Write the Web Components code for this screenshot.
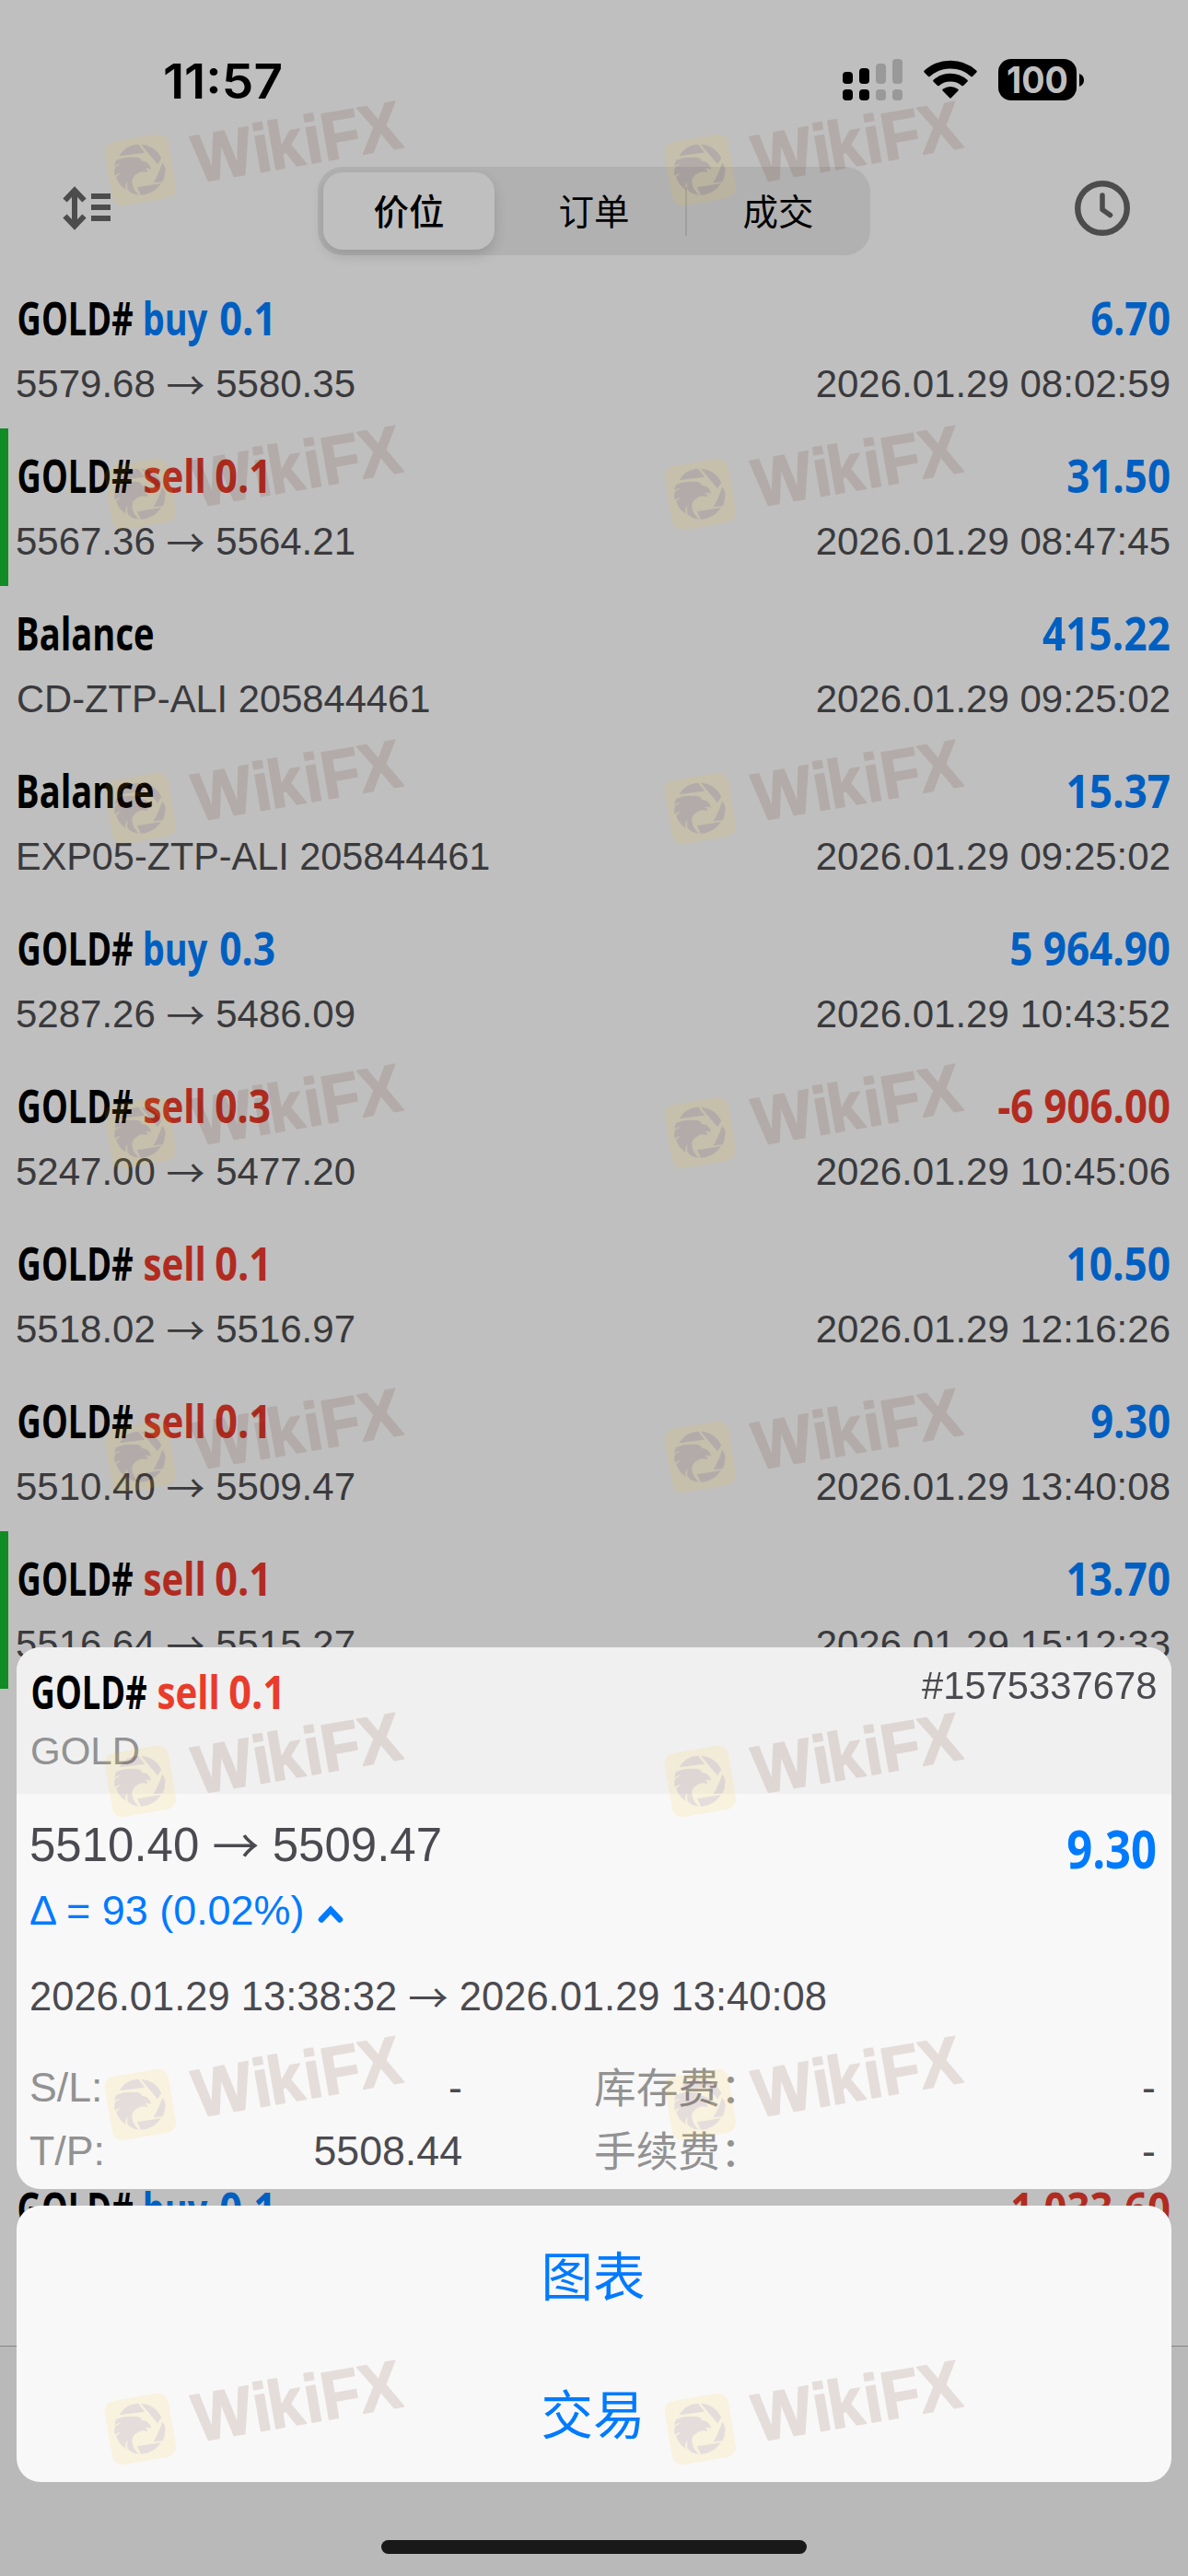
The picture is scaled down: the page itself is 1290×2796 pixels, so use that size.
<!DOCTYPE html>
<html lang="zh-CN">
<head>
<meta charset="utf-8">
<meta name="viewport" content="width=1290">
<title>History</title>
<style>
  :root {
    --bg: #bfbfbf;
    --tab-bg: #b9b9b9;
    --ink: #3a3a3d;
    --buy: #005fc1;
    --sell: #b12b20;
    --mark: #118b24;
    --sheet: #f8f8f8;
    --sheet-ink: #4b4a50;
    --muted: #929292;
    --tint: #007aff;
    --body-font: "Liberation Sans", Arial, "Noto Sans CJK SC", sans-serif;
    --bold-font: "Open Sans", "Noto Sans", sans-serif;
  }

  body {
    margin: 0;
    background: var(--bg);
    font-family: var(--body-font);
  }
</style>
</head>
<body>

<app-screen>
  <status-bar slot="status"></status-bar>
  <nav-bar slot="nav">
    <seg-item selected>价位</seg-item>
    <seg-item>订单</seg-item>
    <seg-item divider>成交</seg-item>
  </nav-bar>

  <deal-row side="buy" symbol="GOLD#" volume="0.1" value="6.70" width="85" from="5579.68" to="5580.35" date="2026.01.29 08:02:59"></deal-row>
  <deal-row side="sell" symbol="GOLD#" volume="0.1" value="31.50" width="111" from="5567.36" to="5564.21" date="2026.01.29 08:47:45" marked></deal-row>
  <deal-row symbol="Balance" value="415.22" width="138" note="CD-ZTP-ALI 205844461" note-width="446" date="2026.01.29 09:25:02"></deal-row>
  <deal-row symbol="Balance" value="15.37" width="110" note="EXP05-ZTP-ALI 205844461" note-width="511" date="2026.01.29 09:25:02"></deal-row>
  <deal-row side="buy" symbol="GOLD#" volume="0.3" value="5 964.90" width="172" from="5287.26" to="5486.09" date="2026.01.29 10:43:52"></deal-row>
  <deal-row side="sell" symbol="GOLD#" volume="0.3" value="-6 906.00" width="186" from="5247.00" to="5477.20" date="2026.01.29 10:45:06" loss></deal-row>
  <deal-row side="sell" symbol="GOLD#" volume="0.1" value="10.50" width="110" from="5518.02" to="5516.97" date="2026.01.29 12:16:26"></deal-row>
  <deal-row side="sell" symbol="GOLD#" volume="0.1" value="9.30" width="85" from="5510.40" to="5509.47" date="2026.01.29 13:40:08"></deal-row>
  <deal-row side="sell" symbol="GOLD#" volume="0.1" value="13.70" width="110" from="5516.64" to="5515.27" date="2026.01.29 15:12:33" marked></deal-row>
  <list-gap rows="3"></list-gap>
  <deal-row side="buy" symbol="GOLD#" volume="0.1" value="-1 033.60" width="186" loss></deal-row>

  <action-sheet slot="sheet">
    <deal-card></deal-card>
    <sheet-actions>
      <sheet-button>图表</sheet-button>
      <sheet-button>交易</sheet-button>
    </sheet-actions>
  </action-sheet>

  <water-marks slot="marks"></water-marks>
</app-screen>

<script>
function define(name, html, setup) {
  const template = document.createElement("template");
  template.innerHTML = html;

  customElements.define(name, class extends HTMLElement {
    constructor() {
      super();
      this.attachShadow({ mode: "open" });
      this.shadowRoot.appendChild(template.content.cloneNode(true));
    }

    connectedCallback() {
      if (setup) setup(this, this.shadowRoot);
    }
  });
}

// Condenses a run of text so that its ink is exactly w pixels wide
const ctx = document.createElement("canvas").getContext("2d");

define("fit-text", `
<style>
  :host { display: inline-block; white-space: normal; }
  span { display: inline-block; transform-origin: 0 50%; white-space: pre; }
</style>
<span><slot></slot></span>
`, (el, root) => {
  const w = Number(el.getAttribute("w"));
  const style = getComputedStyle(el);
  ctx.font = `${style.fontWeight} ${style.fontSize} ${style.fontFamily}`;
  const m = ctx.measureText(el.textContent);
  const scale = w / (m.actualBoundingBoxLeft + m.actualBoundingBoxRight);
  el.style.width = w + "px";
  root.querySelector("span").style.transform =
    `translateX(${m.actualBoundingBoxLeft * scale}px) scaleX(${scale})`;
});

define("app-screen", `
<style>
  :host {
    display: flex;
    flex-direction: column;
    position: relative;
    width: 1290px;
    height: 2796px;
    overflow: hidden;
    background: var(--bg);
  }

  .list {
    height: 2252px;
    overflow: hidden;
  }

  .tabs {
    flex: 1;
    display: flex;
    justify-content: center;
    align-items: flex-end;
    border-top: 1px solid #868686;
    background: var(--tab-bg);
  }

  .home {
    width: 462px;
    height: 15px;
    margin-bottom: 24px;
    border-radius: 8px;
    background: #191919;
  }
</style>
<slot name="status"></slot>
<slot name="nav"></slot>
<div class="list"><slot></slot></div>
<div class="tabs"><div class="home"></div></div>
<slot name="sheet"></slot>
<slot name="marks"></slot>
`);

define("status-bar", `
<style>
  :host {
    display: flex;
    justify-content: space-between;
    align-items: center;
    box-sizing: border-box;
    height: 173px;
    padding: 0 112px 0 179px;
    font-family: Inter, sans-serif;
    color: #000;
  }

  .time { font-size: 52px; font-weight: 600; line-height: 60px; margin-top: 5px; }
  .icons { display: flex; align-items: center; }
  .signal { margin-right: 22px; }
  .wifi { margin-right: 23px; }
  .battery {
    display: flex;
    align-items: center;
    justify-content: center;
    width: 85px;
    height: 45px;
    border-radius: 14px;
    background: #000;
    color: var(--bg);
    font-size: 40px;
    font-weight: 700;
    line-height: 45px;
  }
  .nub { margin-left: 3px; }
</style>
<fit-text class="time" w="126">11:57</fit-text>
<div class="icons">
  <svg class="signal" width="66" height="46" viewBox="0 0 66 46">
    <g fill="#000">
      <rect x="0" y="14" width="11" height="13" rx="4"/>
      <rect x="18" y="10" width="11" height="17" rx="4"/>
      <rect x="0" y="33" width="11" height="12" rx="4"/>
      <rect x="18" y="33" width="11" height="12" rx="4"/>
    </g>
    <g fill="#999">
      <rect x="36" y="5" width="11" height="22" rx="4"/>
      <rect x="54" y="0" width="11" height="27" rx="4"/>
      <rect x="36" y="33" width="11" height="12" rx="4"/>
      <rect x="54" y="33" width="11" height="12" rx="4"/>
    </g>
  </svg>
  <svg class="wifi" width="58" height="43" viewBox="0 0 58 43">
    <path d="M0.6 13.4Q-.2 12.500.8 11.600Q12.500.8 29 .8Q45.500.8 57.200 11.600Q58.200 12.500 57.400 13.400L53 17.900Q52.200 18.600 51.300 17.900Q42 9.500 29 9.500Q16 9.500 6.700 17.900Q5.800 18.600 5 17.900Z"/>
    <path d="M10.500 23.500Q9.700 22.600 10.600 21.800Q18.500 14.800 29 14.800Q39.500 14.800 47.400 21.800Q48.300 22.600 47.500 23.500L43 27.900Q42.200 28.600 41.300 27.900Q36 23.500 29 23.500Q22 23.500 16.700 27.900Q15.800 28.600 15 27.900Z"/>
    <path d="M20.600 33.400Q19.800 32.500 20.700 31.800Q24.500 29 29 29Q33.500 29 37.300 31.800Q38.200 32.500 37.400 33.400L29.800 41.300Q29 42 28.200 41.300Z"/>
  </svg>
  <div class="battery"><fit-text class="level" w="65">100</fit-text></div>
  <svg class="nub" width="6" height="14" viewBox="0 0 6 14"><path d="M0 0Q5 2 5 7T0 14Z"/></svg>
</div>
`);

define("nav-bar", `
<style>
  :host {
    display: flex;
    align-items: center;
    height: 96px;
    padding: 8px 63px 17px 68px;
  }

  .segments {
    display: flex;
    box-sizing: border-box;
    width: 600px;
    height: 96px;
    padding: 6px;
    border-radius: 27px;
    background: #b1b1b1;
  }
  svg { display: block; margin-top: -6px; }
  .left { width: 277px; }
  .clock { margin-left: auto; }
</style>
<div class="left">
  <svg width="54" height="48" viewBox="0 0 54 48" fill="none" stroke="#4c4c4c" stroke-width="6">
    <path d="M13 5V43" />
    <path d="M2.500 15.500L13 4.500L23.500 15.500M2.500 32.500L13 43.500L23.500 32.500"/>
    <path d="M31 11H52M31 23H52M31 35H52"/>
  </svg>
</div>
<div class="segments"><slot></slot></div>
<svg class="clock" width="60" height="60" viewBox="0 0 60 60" fill="none" stroke="#4c4c4c" stroke-width="6.400">
  <circle cx="30" cy="30" r="26.800"/>
  <path d="M30 16V31.500L38.500 37.500" stroke-linecap="round" stroke-linejoin="round" stroke-width="5.500"/>
</svg>
`);

define("seg-item", `
<style>
  :host {
    display: flex;
    flex: 0 0 200px;
    align-items: center;
    justify-content: center;
    position: relative;
    border-radius: 21px;
    color: #000;
    font: 400 38.500px/60px "Noto Sans CJK SC", sans-serif;
    padding-bottom: 4px;
  }
  :host([selected]) {
    flex: 0 0 186px;
    margin-right: 8px;
    padding-bottom: 4px;
    font-weight: 500;
    background: var(--bg);
    box-shadow: 0 6px 14px rgba(0, 0, 0, .14);
    box-sizing: border-box;
    height: 84px;
  }
  :host([divider])::before {
    content: "";
    position: absolute;
    left: -1px;
    top: 16px;
    width: 2px;
    height: 53px;
    border-radius: 2px;
    background: #9f9f9f;
  }
</style>
<slot></slot>
`);

define("deal-row", `
<style>
  :host {
    display: block;
    box-sizing: border-box;
    height: 171px;
    padding: 20px 20px 0;
    color: var(--ink);
  }
  :host([marked]) { box-shadow: inset 9px 0 var(--mark); }

  .line { display: flex; justify-content: space-between; }
  .head {
    font: 700 51px/60px var(--bold-font);
    color: #000;
  }
  .sub {
    margin: 0 -1px 0 -3px;
    font-size: 42px;
    line-height: 85px;
    white-space: pre;
  }
  .title { display: flex; }
  .side { margin-left: 13px; }
  .volume { margin-left: 13px; }
  .note { margin-left: 3px; }
  .value { color: var(--buy); }
  :host([side="buy"]) .deal { color: var(--buy); }
  :host([side="sell"]) .deal { color: var(--sell); }
  :host([loss]) .value { color: var(--sell); }
  .arrow { font-family: "Noto Sans CJK SC"; line-height: 0; vertical-align: -3px; }
</style>
<div class="line head"><div class="title"></div><div class="value"></div></div>
<div class="line sub"><div class="left"></div><div class="date"></div></div>
`, (el, root) => {
  const get = (name) => el.getAttribute(name) || "";
  const side = get("side");
  const sideWidth = side === "buy" ? 69 : 64;
  const volumeWidth = get("volume") === "0.3" ? 59 : 55;

  root.querySelector(".title").innerHTML = side
    ? `<fit-text w="124">${get("symbol")}</fit-text>
       <fit-text class="deal side" w="${sideWidth}">${side}</fit-text>
       <fit-text class="deal volume" w="${volumeWidth}">${get("volume")}</fit-text>`
    : `<fit-text w="146">${get("symbol")}</fit-text>`;
  root.querySelector(".value").innerHTML = `<fit-text w="${get("width")}">${get("value")}</fit-text>`;
  if (get("from")) {
    root.querySelector(".left").innerHTML = `${get("from")} <span class="arrow">→</span> ${get("to")}`;
  } else if (get("note")) {
    root.querySelector(".left").innerHTML = `<fit-text class="note" w="${get("note-width")}">${get("note")}</fit-text>`;
  }
  root.querySelector(".date").textContent = get("date");
});

define("list-gap", `
<style>
  :host { display: block; }
</style>
`, (el) => {
  el.style.height = el.getAttribute("rows") * 171 + "px";
});

define("action-sheet", `
<style>
  :host {
    display: flex;
    flex-direction: column;
    gap: 18px;
    position: absolute;
    left: 18px;
    right: 18px;
    bottom: 102px;
  }
</style>
<slot></slot>
`);

define("deal-card", `
<style>
  :host {
    display: flex;
    flex-direction: column;
    height: 588px;
    border-radius: 26px;
    overflow: hidden;
    background: var(--sheet);
    color: var(--sheet-ink);
    white-space: nowrap;
  }

  .row { display: flex; justify-content: space-between; }
  header {
    box-sizing: border-box;
    height: 159px;
    padding: 17px 17px 0;
    background: #f0f0f0;
  }
  .title { display: flex; font: 700 51px/60px var(--bold-font); color: #000; }
  .title .sell { margin-left: 13px; color: #e93c2b; }
  .ticket { font-size: 42px; line-height: 50px; }
  .name { font-size: 42px; line-height: 70px; color: var(--muted); margin: 1px 0 0 -2px; }
  .body { padding: 24px 17px 0 14px; }
  .price { font-size: 51px; line-height: 64px; white-space: pre; }
  .profit { font: 700 56.500px/74px var(--bold-font); color: var(--tint); margin: -1px 0 1px; }
  .delta {
    display: flex;
    align-items: center;
    gap: 14px;
    margin: -1px 0 0 1px;
    font-size: 45px;
    line-height: 60px;
    color: var(--tint);
  }
  .delta svg { margin-top: 7px; }
  .dates { margin-top: 33px; font-size: 43.500px; line-height: 60px; white-space: pre; }
  .grid {
    display: grid;
    grid-template-columns: 470px 1fr;
    column-gap: 143px;
    grid-auto-rows: 69px;
    margin-top: 34px;
    font-size: 44.700px;
    line-height: 69px;
  }
  .label { color: var(--muted); }
  .cjk { font: 45.700px/69px "Noto Sans CJK SC", sans-serif; margin-top: -2px; }
  .arrow { font-family: "Noto Sans CJK SC"; line-height: 0; vertical-align: -3px; }
</style>
<header>
  <div class="row">
    <div class="title"><fit-text w="124">GOLD#</fit-text><fit-text class="sell" w="64">sell</fit-text><fit-text class="sell" w="55">0.1</fit-text></div>
    <div class="ticket"><fit-text w="254">#1575337678</fit-text></div>
  </div>
  <div class="name">GOLD</div>
</header>
<div class="body">
  <div class="row">
    <div class="price">5510.40 <span class="arrow">→</span> 5509.47</div>
    <div class="profit"><fit-text w="96">9.30</fit-text></div>
  </div>
  <div class="delta">
    <fit-text w="298">Δ = 93 (0.02%)</fit-text>
    <svg width="28" height="20" viewBox="0 0 28 20" fill="none" stroke="#007aff" stroke-width="6.500" stroke-linecap="round"><path d="M4 15.500L14 5L24 15.500"/></svg>
  </div>
  <div class="dates">2026.01.29 13:38:32 <span class="arrow">→</span> 2026.01.29 13:40:08</div>
  <div class="grid">
    <div class="row"><span class="label">S/L:</span><span>-</span></div>
    <div class="row"><span class="label cjk">库存费：</span><span>-</span></div>
    <div class="row"><span class="label">T/P:</span><span>5508.44</span></div>
    <div class="row"><span class="label cjk">手续费：</span><span>-</span></div>
  </div>
</div>
`);

define("sheet-actions", `
<style>
  :host {
    display: flex;
    flex-direction: column;
    border-radius: 26px;
    background: var(--sheet);
  }
</style>
<slot></slot>
`);

define("sheet-button", `
<style>
  :host {
    display: flex;
    align-items: center;
    justify-content: center;
    box-sizing: border-box;
    height: 150px;
    padding: 0 2px 5px 0;
    color: var(--tint);
    font: 56.500px/80px "Noto Sans CJK SC", sans-serif;
  }
</style>
<slot></slot>
`);

// Two columns of logos, repeated down the whole screen
const markRows = [0, 352, 693, 1045, 1397, 1749, 2100, 2452];

define("water-marks", `
<style>
  :host {
    position: absolute;
    inset: 0;
    pointer-events: none;
  }
  wiki-mark { position: absolute; }
</style>
`, (el, root) => {
  for (const top of markRows) {
    for (const left of [0, 608]) {
      const mark = document.createElement("wiki-mark");
      mark.style.left = left + "px";
      mark.style.top = top + "px";
      root.appendChild(mark);
    }
  }
});

define("wiki-mark", `
<style>
  :host { display: block; width: 460px; height: 240px; }
  text {
    font: 700 73px "Liberation Sans", sans-serif;
    stroke-linejoin: round;
  }
</style>
<svg width="460" height="250" viewBox="0 0 460 250">
  <defs>
    <g id="eagle">
      <path d="M-22.600 -14.700Q-18 -23 -10 -25.700Q-6 -27.300 -2 -27.300L5 -18.300Z"/>
      <path d="M.8 -27.300Q7 -27 12.300 -24Q20 -19.500 23 -12.300L19 -5.700Z"/>
      <path d="M24 -7.300Q27.500 -3 27.300 1Q27 8 24.500 13.300L14.400 14.300Q20 5 24 -7.300Z"/>
      <path d="M-3.300 19.300L22.600 15Q18 22 12.300 24.500Q7 27.500 .8 27.700Z"/>
      <path d="M-26 -10Q-17 -14 -8 -13Q0 -14 2 -9Q10 -9 12 0Q9 -2 5 -1Q8 0 8 3Q0 1 -4 5Q-11 9 -8 18Q-6 24 -1 27.500Q-10 27 -14 21Q-14 17 -14 13Q-17 17 -15.500 22Q-24 16 -26 8L-21 4Q-26 5 -27.400 7Q-29 0 -26.500 -3L-21 -6Q-26 -6 -27.500 -3Q-28 -7 -26 -10Z"/>
    </g>
    <mask id="cut">
      <rect width="460" height="250" fill="#fff"/>
      <use href="#eagle" x="152.200" y="184" fill="#000"/>
    </mask>
  </defs>
  <g mask="url(#cut)">
    <rect x="83.800" y="172.700" width="70" height="70" rx="11" transform="rotate(-9.800)" fill="#ffc800" fill-opacity=".1"/>
  </g>
  <use href="#eagle" x="152.200" y="184" fill="#64230f" fill-opacity=".12"/>
  <g opacity=".12" transform="rotate(-9.800) scale(.93 1)">
    <text y="232" x="191 261.500 279 322 342.500 387" fill="#64230f" stroke="#64230f" stroke-width="2">WikiFX</text>
  </g>
</svg>
`);
</script>
</body>
</html>
